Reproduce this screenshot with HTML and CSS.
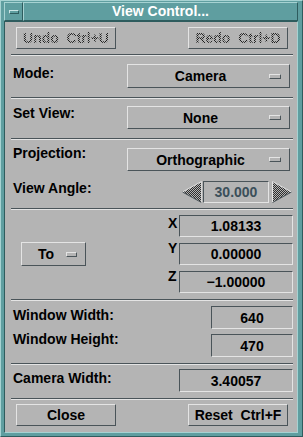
FILE: index.html
```html
<!DOCTYPE html>
<html lang="en">
<head>
  <meta charset="UTF-8">
  <meta name="viewport" content="width=device-width, initial-scale=1.0">
  <title>View Control...</title>
  <link rel="stylesheet" href="styles.css">
</head>
<body>
  <div class="window">
    <div class="titlebar">
      <div class="menu-btn"><span class="menu-glyph"></span></div>
      <div class="title">View Control...</div>
    </div>

    <div class="panel">
      <div class="actions top-actions">
        <button class="push disabled">Undo  Ctrl+U</button>
        <button class="push disabled">Redo  Ctrl+D</button>
      </div>
      <div class="sep sep-a"></div>

      <div class="row row-mode">
        <span class="label">Mode:</span>
        <div class="option"><span class="option-text">Camera</span><span class="indicator"></span></div>
      </div>
      <div class="sep sep-b"></div>

      <div class="row row-view">
        <span class="label">Set View:</span>
        <div class="option"><span class="option-text">None</span><span class="indicator"></span></div>
      </div>
      <div class="sep sep-b"></div>

      <div class="row row-proj">
        <span class="label">Projection:</span>
        <div class="option"><span class="option-text">Orthographic</span><span class="indicator"></span></div>
      </div>

      <div class="row row-angle">
        <span class="label">View Angle:</span>
        <div class="spin">
          <svg class="arrow" width="20" height="22" viewBox="0 0 20 22">
            <defs>
              <pattern id="stip" width="2" height="2" patternUnits="userSpaceOnUse">
                <rect width="2" height="2" fill="#b4b4b4"/>
                <rect width="1" height="1" fill="#2e2e2e"/>
                <rect x="1" y="1" width="1" height="1" fill="#2e2e2e"/>
              </pattern>
            </defs>
            <polygon points="0.5,11 19.5,0.5 19.5,21.5" fill="url(#stip)"/>
            <line x1="0.5" y1="11" x2="19.5" y2="0.5" stroke="#e4e4e4"/>
            <line x1="0.5" y1="11" x2="19.5" y2="21.5" stroke="#4a5459"/>
            <line x1="19.5" y1="0.5" x2="19.5" y2="21.5" stroke="#d8d8d8"/>
          </svg>
          <div class="field angle-field">30.000</div>
          <svg class="arrow arrow-right" width="20" height="22" viewBox="0 0 20 22">
            <polygon points="19.5,11 0.5,0.5 0.5,21.5" fill="url(#stip)"/>
            <line x1="0.5" y1="0.5" x2="0.5" y2="21.5" stroke="#e4e4e4"/>
            <line x1="0.5" y1="0.5" x2="19.5" y2="11" stroke="#e4e4e4"/>
            <line x1="0.5" y1="21.5" x2="19.5" y2="11" stroke="#4a5459"/>
          </svg>
        </div>
      </div>
      <div class="sep sep-c"></div>

      <div class="coords-block">
        <div class="option option-small"><span class="option-text">To</span><span class="indicator"></span></div>
        <div class="coords">
          <span class="axis axis-x">X</span><div class="field">1.08133</div>
          <span class="axis">Y</span><div class="field">0.00000</div>
          <span class="axis">Z</span><div class="field">&minus;1.00000</div>
        </div>
      </div>
      <div class="sep sep-d"></div>

      <div class="row row-ww">
        <span class="label">Window Width:</span>
        <div class="field field-short">640</div>
      </div>
      <div class="row row-wh">
        <span class="label">Window Height:</span>
        <div class="field field-short">470</div>
      </div>
      <div class="sep sep-d"></div>

      <div class="row row-cw">
        <span class="label">Camera Width:</span>
        <div class="field field-long">3.40057</div>
      </div>
      <div class="sep sep-d"></div>

      <div class="actions bottom-actions">
        <button class="push">Close</button>
        <button class="push">Reset  Ctrl+F</button>
      </div>
    </div>
  </div>
</body>
</html>
```

FILE: styles.css
```css
* {
  box-sizing: border-box;
}
body {
  margin: 0;
  background: #ffffff;
  font-family: "Liberation Sans", Arial, sans-serif;
  font-weight: bold;
  font-size: 14px;
  color: #000;
}

/* window frame */
.window {
  width: 303px;
  height: 437px;
  background: #5f9ea0;
  border: 1px solid;
  border-color: #a6d2d2 #2e5c5e #2e5c5e #a6d2d2;
  padding: 1px 4px 3px 3px;
  display: flex;
  flex-direction: column;
}
.titlebar {
  display: flex;
  height: 19px;
}
.menu-btn {
  width: 19px;
  border: 1px solid;
  border-color: #a6d2d2 #2e5c5e #2e5c5e #a6d2d2;
  display: flex;
  align-items: center;
  justify-content: center;
}
.menu-glyph {
  width: 10px;
  height: 4px;
  border: 1px solid;
  border-color: #cce6e6 #2e5c5e #2e5c5e #cce6e6;
}
.title {
  flex: 1;
  border: 1px solid;
  border-color: #a6d2d2 #2e5c5e #2e5c5e #a6d2d2;
  color: #ffffff;
  text-align: center;
  line-height: 17px;
}

/* dialog body */
.panel {
  flex: 1;
  background: #b4b4b4;
  border: 1px solid;
  border-color: #2e5c5e #a6d2d2 #a6d2d2 #2e5c5e;
  padding: 0 4px 0 6px;
  display: flex;
  flex-direction: column;
}
.sep {
  height: 2px;
  border-top: 1px solid #4a5459;
  border-bottom: 1px solid #e4e4e4;
}
.sep-a { margin-top: 5px; }
.sep-b { margin-top: 9px; }
.sep-c { margin-top: 5px; }
.sep-d { margin-top: 6px; }

.actions {
  display: flex;
  justify-content: space-between;
  padding: 0 5px;
}
.top-actions { margin-top: 5px; }
.bottom-actions { margin-top: 4px; }
.push {
  width: 100px;
  height: 22px;
  padding: 0;
  border: 1px solid;
  border-color: #e4e4e4 #4a5459 #4a5459 #e4e4e4;
  background: transparent;
  font: inherit;
  color: #000;
  white-space: pre;
}
.push.disabled {
  color: transparent;
  background: repeating-conic-gradient(#1e1e1e 0 25%, #b4b4b4 0 50%) 0 0 / 2px 2px;
  -webkit-background-clip: text;
  background-clip: text;
}
.push.disabled {
  border-color: #e4e4e4 #4a5459 #4a5459 #e4e4e4;
}

.row {
  display: flex;
  align-items: flex-start;
}
.label {
  line-height: 16px;
  margin-left: 2px;
}
.row-mode { margin-top: 8px; height: 24px; }
.row-mode .label { margin-top: 1px; }
.row-view { margin-top: 7px; height: 23px; }
.row-view .label { margin-top: -1px; }
.row-proj { margin-top: 8px; height: 23px; }
.row-proj .label { margin-top: -3px; }
.row-angle { margin-top: 10px; height: 22px; }
.row-angle .label { margin-top: -1px; }
.row-ww { margin-top: 5px; height: 23px; }
.row-ww .label { margin-top: 1px; }
.row-wh { margin-top: 5px; height: 23px; }
.row-wh .label { margin-top: -3px; }
.row-cw { margin-top: 4px; height: 23px; }
.row-cw .label { margin-top: 1px; }

/* option menus */
.option {
  margin-left: auto;
  margin-right: 3px;
  width: 163px;
  height: 100%;
  display: flex;
  align-items: center;
  border: 1px solid;
  border-color: #e4e4e4 #4a5459 #4a5459 #e4e4e4;
}
.option-text {
  flex: 1;
  text-align: center;
  padding-left: 4px;
}
.indicator {
  width: 12px;
  height: 5px;
  margin-right: 8px;
  border: 1px solid;
  border-color: #e4e4e4 #4a5459 #4a5459 #e4e4e4;
}
.option-small {
  margin-left: 10px;
  margin-right: 0;
  width: 65px;
  height: 24px;
}
.option-small .indicator {
  width: 11px;
}

/* text fields */
.field {
  height: 22px;
  display: flex;
  align-items: center;
  justify-content: center;
  border: 1px solid;
  border-color: #4a5459 #e4e4e4 #e4e4e4 #4a5459;
}
.field-short {
  margin-left: auto;
  width: 82px;
  height: 23px;
}
.field-long {
  margin-left: auto;
  width: 114px;
  height: 23px;
}

.spin {
  margin-left: auto;
  margin-right: 1px;
  display: flex;
  align-items: center;
}
.arrow {
  display: block;
}
.angle-field {
  width: 66px;
  margin-left: 1px;
  margin-right: 3px;
  color: #3b4f5a;
}

.coords-block {
  margin-top: 5px;
  height: 78px;
  display: flex;
  align-items: center;
}
.coords {
  margin-left: auto;
  display: grid;
  grid-template-columns: 11px 114px;
  grid-auto-rows: 22px;
  row-gap: 6px;
}
.axis {
  line-height: 10px;
}
.axis-x {
  padding-top: 3px;
}
```
